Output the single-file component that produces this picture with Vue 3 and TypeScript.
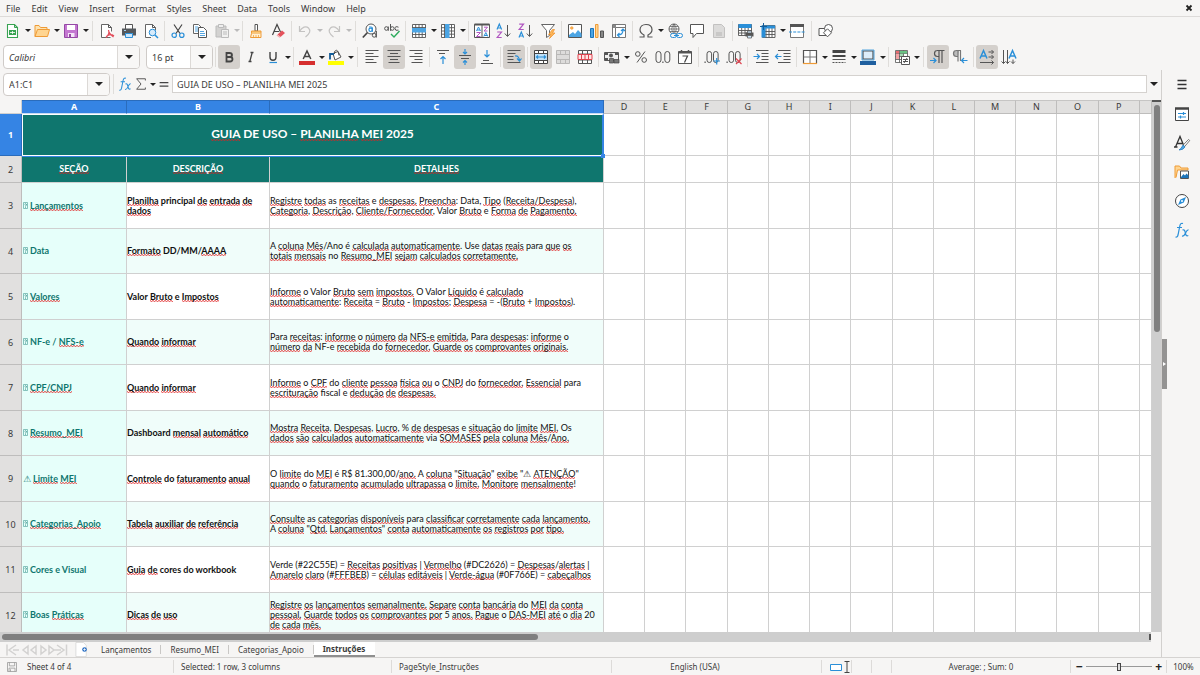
<script setup lang="ts">
import { ref } from 'vue'

interface Tool {
  kind: 'button' | 'sep' | 'wide'
  icon: string
  label: string
  menu: boolean
  pressed: boolean
  off: boolean
}

interface Segment {
  text: string
  marked: boolean
}

interface GuideRow {
  n: number
  warn: boolean
  section: string
  title: string[]
  details: string[]
}

const K = 'fill="none" stroke="#555" stroke-width="1"'
const B = 'fill="none" stroke="#2a8fd8" stroke-width="1.2"'

const icons: Record<string, string> = {
  new: `<path d="M2.500 1.500h7l3 3v10h-10z" fill="#fff" stroke="#38a352" stroke-width="1.100"/><path d="M9.500 1.500v3h3" fill="none" stroke="#38a352"/><path d="M4 7h7v5H4z" fill="#38a352"/><path d="M5 9.500h5M7.500 8v3" stroke="#fff" stroke-width=".8"/>`,
  open: `<path d="M1 13.500v-11h4l1.500 2h6.500v2" fill="#fde3b0" stroke="#ef9b36"/><path d="M1 13.500l2.500-7h12l-2 7z" fill="#ffd591" stroke="#ef9b36"/>`,
  save: `<path d="M1.500 1.500h13v13h-13z" fill="#c477d1" stroke="#9548a5"/><path d="M4 2h8v5H4z" fill="#fff"/><path d="M5 10h6.500v4H5z" fill="#f4e5f7"/><path d="M6 11h2v3H6z" fill="#9548a5"/>`,
  pdf: `<path d="M11.500 14.500h-9v-13h7l3 3v4" fill="#fff" stroke="#666"/><path d="M9.500 1.500v3h3" ${K}/><path d="M9.500 7c1.500 3-1 6-2.500 7.500C8 12 12 10.500 15 13M9.500 7c0 3 3 5.500 5 7" fill="none" stroke="#e34d5b" stroke-width="1.200"/>`,
  print: `<path d="M4.500 6v-4.500h7V6" fill="#fff" stroke="#555"/><path d="M1 5.500h14v7h-3v-2H4v2H1z" fill="#54585c"/><path d="M4.500 10.500h7v4h-7z" fill="#cfe7fa" stroke="#2a8fd8"/><path d="M3 7.500h2" stroke="#9fd0f5"/>`,
  preview: `<path d="M8 14.500H2.500v-13h7l3 3v3" fill="#fff" stroke="#666"/><path d="M9.500 1.500v3h3" ${K}/><circle cx="9.500" cy="9.500" r="3.300" fill="#d7ebfb" stroke="#2a8fd8"/><path d="M12 12l3 3" stroke="#2a8fd8" stroke-width="1.500"/>`,
  cut: `<path d="M4 1.500l6 9M12 1.500l-6 9" fill="none" stroke="#444" stroke-width="1.200"/><circle cx="4.200" cy="12.200" r="2.200" ${B}/><circle cx="11.800" cy="12.200" r="2.200" ${B}/>`,
  copy: `<path d="M6 10.500H1.500v-9h5l3 3" fill="#fff" stroke="#666"/><path d="M3 4h3M3 6h3M3 8h3" stroke="#2a8fd8" stroke-width=".8"/><path d="M6.500 4.500h5l3 3v7h-8z" fill="#fff" stroke="#555"/><path d="M8 8.500h4M8 10.500h5M8 12.500h5" stroke="#2a8fd8" stroke-width=".8"/>`,
  paste: `<path d="M2 3h10v11H2z" fill="#d3d2d1" stroke="#bbb"/><path d="M4.500 1.500h5v3h-5z" fill="#eee" stroke="#bbb"/><path d="M7.500 6.500h7v8h-7z" fill="#f1f1f0" stroke="#bbb"/><path d="M9 9h4M9 11h4" stroke="#bbb"/>`,
  clone: `<path d="M7 1.500h2.500V8H7z" fill="#fff" stroke="#555"/><path d="M3.500 8h9.500v2.500H3.500z" fill="#f7c777" stroke="#ef9b36"/><path d="M3.500 10.500L2.500 14.500H13v-4" fill="#fff0d2" stroke="#ef9b36"/><path d="M5.500 12v2.500M8 12v2.500M10.500 12v2.500" stroke="#ef9b36" stroke-width=".7"/>`,
  clear: `<path d="M2.500 12L7 1.500 10.500 9M4 8.500h5" fill="none" stroke="#444" stroke-width="1.200"/><path d="M7.500 11.500l4.500-4 3 2.500-4.500 4z" fill="#e4525c"/><path d="M7.500 11.500l3 2.500-1 .8-3-2.200z" fill="#f4a6ab"/>`,
  undo: `<path d="M2.500 3v5.500H8M2.500 8.500C5 4 9 2.500 11.500 5s1.500 5.500-3 9" fill="none" stroke="#c4c3c2" stroke-width="1.200"/>`,
  redo: `<path d="M13.500 3v5.500H8M13.500 8.500C11 4 7 2.500 4.500 5S3 10.500 7.500 14" fill="none" stroke="#c4c3c2" stroke-width="1.200"/>`,
  find: `<circle cx="9" cy="6" r="5" fill="#fff" stroke="#555"/><path d="M5.500 9.500L.8 14.500" stroke="#444" stroke-width="1.700"/><circle cx="8.600" cy="6.800" r="1.700" ${B}/><path d="M7 4h2q1.400 0 1.400 1.500v3.200" ${B}/><circle cx="12.200" cy="12.300" r="1.900" fill="#f6f5f4" stroke="#555"/><path d="M14.300 8v6.500" stroke="#555" stroke-width="1.200"/>`,
  spell: `<circle cx="2.400" cy="5.500" r="1.800" ${K}/><path d="M4.300 3.500v4.300M6.500 1v6.800M14.500 4.200q-3.500-1.500-3.500 1.300t3.500 1.600" ${K}/><circle cx="8.300" cy="5.500" r="1.800" ${K}/><path d="M7 11l3 3 5.500-6" fill="none" stroke="#2cab5c" stroke-width="1.400"/>`,
  row: `<path d="M1.500 1.500h13v13h-13zM4.700 1.500v13M8 1.500v13M11.200 1.500v13M1.500 11.500h13M1.500 4.500h13" fill="#fff" stroke="#555" stroke-width=".9"/><path d="M1 5h14v4.500H1z" fill="#4ca5e4"/>`,
  col: `<path d="M1.500 1.500h13v13h-13zM1.500 4.700h13M1.500 8h13M1.500 11.200h13M11.500 1.500v13M4.500 1.500v13" fill="#fff" stroke="#555" stroke-width=".9"/><path d="M5 1h4.500v14H5z" fill="#4ca5e4"/>`,
  sort: `<path d="M.5 1.500h15v13H.5zM8 1.500v13" fill="#fff" stroke="#555"/><path d="M.5 1.500h15" stroke="#555" stroke-width="2"/><path d="M2.500 8l2-4 2 4M3 7h3M9.800 13.500l2-4 2 4M10.300 12.500h3" fill="none" stroke="#2a8fd8"/><path d="M2.500 9.500h4L2.500 13.500h4M10 4.200h3.500L10 8h3.500" fill="none" stroke="#b055c0"/>`,
  asc: `<path d="M1 6.500l2.300-5.500 2.300 5.500M1.800 5h3" ${B}/><path d="M1.200 9h4.300l-4.300 5.500h4.500" fill="none" stroke="#b055c0" stroke-width="1.200"/><path d="M11.500 2v11M8.800 10.500l2.700 3 2.700-3" ${K}/>`,
  desc: `<path d="M1.200 1.200h4.300L1.200 6.500h4.500" fill="none" stroke="#b055c0" stroke-width="1.200"/><path d="M1 14.500L3.300 9l2.300 5.500M1.800 13h3" ${B}/><path d="M11.500 2v11M8.800 10.500l2.700 3 2.700-3" ${K}/>`,
  filter: `<path d="M1.500 1.500h13L9.500 7.500v5l-3 2v-7z" fill="#fff" stroke="#666"/><path d="M12.500 6.500l-4 5h2.500l-1.500 4 5.500-5.500h-2.500l2-3.500z" fill="#fcb65a" stroke="#ef8f26" stroke-width=".7"/>`,
  image: `<path d="M1.500 1.500h13v13h-13z" fill="#fff" stroke="#555"/><path d="M2 12l4-3 2 2 3-4 3.500 3.500V14H2z" fill="#4ca5e4"/><circle cx="4.800" cy="5" r="1.300" fill="#fcb65a" stroke="#ef8f26" stroke-width=".6"/>`,
  chart: `<path d="M1.500 5.500h3v9h-3z" fill="#4ca5e4" stroke="#1c75bb"/><path d="M6.500 1.500h2.500v13H6.500z" fill="#ffd591" stroke="#ef9b36"/><path d="M11.500 8h3v6.500h-3z" fill="#888" stroke="#555"/>`,
  pivot: `<path d="M1.500 1.500h13v13h-13zM4.500 1.500v13M1.500 4.500h13" fill="#fff" stroke="#777"/><path d="M2 2h3v3H2z" fill="#888"/><path d="M7 12c3 0 5-2 5-5M10 8l2-2 2 2M8.500 10l-2 2 2 2" ${B}/>`,
  omega: `<path d="M1.500 14h4.500v-2C3 10.500 2 9 2 6.800 2 3.500 4.500 1.500 8 1.500s6 2 6 5.300c0 2.200-1 3.700-4 5.200v2h4.500" fill="none" stroke="#555" stroke-width="1.200"/>`,
  link: `<circle cx="7" cy="6" r="5" fill="#fff" stroke="#555" stroke-width=".9"/><path d="M2 6h10M7 1v10M3 3.500h8M3 8.500h8M7 1q-4.500 5 0 10M7 1q4.500 5 0 10" fill="none" stroke="#555" stroke-width=".7"/><rect x="3.500" y="10.500" width="6" height="4" rx="2" fill="#f6f5f4" stroke="#2a8fd8"/><rect x="9.500" y="10.500" width="6" height="4" rx="2" fill="#f6f5f4" stroke="#2a8fd8"/><path d="M7 12.500h5" stroke="#2a8fd8"/>`,
  comment: `<path d="M1.500 1.500h13v9H7.500L4 14.500v-4H1.500z" fill="#fff" stroke="#555"/>`,
  header: `<path d="M2.500 1.500h8l3 3v10h-11z" fill="#dcdbda" stroke="#c2c1c0"/><path d="M5 9h6v4H5z" fill="#c9c8c7"/>`,
  range: `<path d="M.5 1.500h13v11H.5zM3.700 1.500v11M7 1.500v11M10.200 1.500v11M.5 7.500h13M.5 10h13" fill="#fff" stroke="#555" stroke-width=".9"/><path d="M.5 1h13v4H.5z" fill="#2a8fd8"/><path d="M7.500 9.500h8v4h-8z" fill="#555"/><path d="M9.500 8h4v2h-4zM9.500 12.500h4v2.500h-4z" fill="#cfe7fa" stroke="#555" stroke-width=".7"/>`,
  freeze: `<path d="M2.500 2.500h12.500v12H2.500zM6 2.500v12M9 2.500v12M12 2.500v12M2.500 8.500h12.500M2.500 11.500h12.500" fill="#fff" stroke="#555" stroke-width=".9"/><path d="M1.500 2.500h13.500v3H1.500zM1.500 2.500h4v12h-4z" fill="#2a8fd8"/><path d="M3.500 0v7M0 3.500h7" stroke="#145d99"/>`,
  split: `<path d="M1.500 2.500h13v12h-13z" fill="#fff" stroke="#777"/><path d="M1 1h14v3H1z" fill="#555"/><path d="M0 9h16" stroke="#2a8fd8" stroke-width="1.200" stroke-dasharray="3 1.200"/>`,
  shapes: `<path d="M1 5.500h7v7H1z" fill="#fff" stroke="#555"/><circle cx="10.500" cy="5.500" r="4" fill="#fff" stroke="#555"/><path d="M9.500 5.800l4 4-4 4-4-4z" fill="#fff" stroke="#555"/>`,
  bold: `<path d="M5.500 4h3q2.500 0 2.500 2T8.500 8h-3zM5.500 8h3.500q2.500 0 2.500 2.200T9 12.500H5.500z" fill="none" stroke="#444" stroke-width="1.800"/>`,
  italic: `<path d="M7.500 3.500h3M5.500 12.500h3M9.200 3.500L6.800 12.500" fill="none" stroke="#444" stroke-width="1.300"/>`,
  underline: `<path d="M5 3v5q0 3.200 3 3.200t3-3.200V3" fill="none" stroke="#444" stroke-width="1.400"/><path d="M4.500 13.500h7.500" stroke="#2a8fd8" stroke-width="1.200"/>`,
  fontcolor: `<path d="M4.200 10L8 2l3.800 8M5.500 7.500h5" fill="none" stroke="#444" stroke-width="1.500"/><path d="M0 12h16v4H0z" fill="#d62f2f"/>`,
  highlight: `<path d="M5 4.500l5-2 3 5.500-6 3z" fill="#fff" stroke="#555"/><path d="M6.500 5V2.500q2-2.500 3.500 0l1 4" ${K}/><path d="M2 10.500V5h4" fill="none" stroke="#145d99" stroke-width="1.800"/><path d="M0 12h16v4H0z" fill="#ffff00"/>`,
  left: `<path d="M1.500 1.500h13M1.500 4.500h8M1.500 7.500h13M1.500 10.500h8M1.500 13.500h11" ${K}/>`,
  center: `<path d="M1.500 1.500h13M4 4.500h8M1.500 7.500h13M4 10.500h8M2.500 13.500h11" ${K}/>`,
  right: `<path d="M1.500 1.500h13M6.500 4.500h8M1.500 7.500h13M6.500 10.500h8M3.500 13.500h11" ${K}/>`,
  top: `<path d="M2 1.500h12M4 4.500h6" ${K}/><path d="M8 15V7.500M5.500 10L8 7.500 10.500 10" ${B}/>`,
  middle: `<path d="M2 6.500h12M4 9.500h8" ${K}/><path d="M8 0v5M6 3l2 2 2-2M8 16v-4.500M6 13.500l2-2 2 2" ${B}/>`,
  bottom: `<path d="M2 14.500h12M4 11.500h6" ${K}/><path d="M8 1v7M5.500 5.500L8 8l2.500-2.500" ${B}/>`,
  wrap: `<path d="M1.500 1.500h13M1.500 4.500h8M1.500 7.500h6M1.500 10.500h6M1.500 13.500h13" ${K}/><path d="M9 7q4-.5 4.500 4.500M11 9.500l2.500 2.500L15.500 9.500" ${B}/>`,
  merge: `<path d="M1.500 1.500h13v13h-13zM5.500 1.500v3M10.500 1.500v3M5.500 11.500v3M10.500 11.500v3M1.500 4.500h13M1.500 11.500h13" fill="#fff" stroke="#444"/><path d="M2 5h12v6H2z" fill="#bfe0f8"/><path d="M3 8h10M5 6.500L3.500 8 5 9.500M11 6.500L12.500 8 11 9.500" ${B}/>`,
  mergeoff: `<path d="M1.500 1.500h13v13h-13zM1.500 5.500h13M1.500 10.500h13M5.500 1.500v4M10.500 1.500v4M5.500 10.500v4M10.500 10.500v4" fill="#dddcdb" stroke="#b9b8b7"/>`,
  splitcells: `<path d="M1.500 1.500h13v13h-13zM1.500 5h13M1.500 11h13M5.500 1.500v13M10.500 1.500v13" fill="#fff" stroke="#555"/><path d="M1 5.500h14v5H1zM4.500 5.500v5M8 5.500v5M11.500 5.500v5" fill="#ffe3e3" stroke="#df4450"/>`,
  currency: `<path d="M.5 3.500h14v8H.5z" fill="#eee" stroke="#555"/><path d="M1 4h3v2H1zM11 4h3v2h-3zM1 9h3v2H1z" fill="#555"/><circle cx="7" cy="6.500" r="2" fill="#555"/><path d="M5.500 9.500h4V14h-4zM10 10.500h5V14h-5z" fill="#777" stroke="#444" stroke-width=".7"/>`,
  percent: `<circle cx="4.800" cy="5" r="2.300" ${K}/><circle cx="11.200" cy="11" r="2.300" ${K}/><path d="M12 2.500L4 13.500" ${K}/>`,
  number: `<rect x="1" y="2.500" width="5" height="11" rx="2.500" ${K}/><rect x="9.800" y="2.500" width="5" height="11" rx="2.500" ${K}/><path d="M7.300 12.500h1.200V14H7.300z" fill="#555"/>`,
  date: `<path d="M1.500 2.500h13v12h-13z" fill="#fff" stroke="#555"/><path d="M1.500 3.500h13" stroke="#555" stroke-width="2"/><path d="M4.500 1v3M11.500 1v3" stroke="#555" stroke-width="1.500"/><path d="M5.500 7h5l-3 6.500" fill="none" stroke="#444" stroke-width="1.200"/>`,
  adddec: `<rect x="3" y="2.500" width="4.600" height="11" rx="2.300" ${K}/><rect x="9.500" y="2.500" width="4.600" height="11" rx="2.300" ${K}/><path d="M.5 12.500h1.200V14H.5z" fill="#555"/><path d="M9.500 12h6.500M12.700 9v6.500" ${B}/>`,
  deldec: `<rect x="3" y="2.500" width="4.600" height="11" rx="2.300" ${K}/><rect x="9.500" y="2.500" width="4.600" height="11" rx="2.300" ${K}/><path d="M.5 12.500h1.200V14H.5z" fill="#555"/><path d="M10 9.500l5.500 5.500M15.500 9.500L10 15" fill="none" stroke="#e04450" stroke-width="1.200"/>`,
  indent: `<path d="M3 1.500h12.500M8.500 4.500h7M8.500 7.500h7M8.500 10.500h7M3 13.500h12.500" ${K}/><path d="M.5 7.500h6M4 5l2.500 2.500L4 10" ${B}/>`,
  outdent: `<path d="M3 1.500h12.500M8.500 4.500h7M8.500 7.500h7M8.500 10.500h7M3 13.500h12.500" ${K}/><path d="M.5 7.500h6M3 5L.5 7.500 3 10" ${B}/>`,
  borders: `<path d="M1.500 14.500v-13h13v13" fill="#fff" stroke="#555" stroke-width="1.200"/><path d="M8 2v12M2 8h12" stroke="#777"/><path d="M1 14.500h14" stroke="#ef9b36" stroke-width="1.200"/>`,
  linestyle: `<path d="M1.500 2.500h13" stroke="#444" stroke-width="3"/><path d="M1.500 7h13" stroke="#444" stroke-width="2"/><path d="M1.500 10.500h13" stroke="#555"/><path d="M1.500 13.500h13" stroke="#555" stroke-dasharray="2 1"/>`,
  linecolor: `<path d="M3 2h10v8H3z" fill="#dcedfa" stroke="#555" stroke-width="1.200"/><path d="M2 1h12v10H2z" fill="none" stroke="#2a8fd8" stroke-width=".8"/><path d="M0 12h16v4H0z" fill="#1f5f9f"/>`,
  cond: `<path d="M1.500 1.500h12v12h-12zM1.500 4.500h12M1.500 7.500h12M1.500 10.500h12M5.500 1.500v12M9.500 1.500v12" fill="#fff" stroke="#555" stroke-width=".8"/><path d="M2 2h3v2.500H2z" fill="#e86b70"/><path d="M6 2h7v2.500H6z" fill="#69c383"/><path d="M2 5h3v5H2z" fill="#f3a2a5"/><path d="M6 5h3v2H6z" fill="#a6dfb4"/><path d="M7.500 7.500h8v8h-8z" fill="#fff" stroke="#555"/><path d="M9 10.500h5M9 12.500h5M13 9l-3 5" ${K}/>`,
  ltr: `<path d="M11 1.500h-3.500q-3 0-3 3t3 3H9M9 1.500v12.500M12 1.500v12.500M7 1.500h7.500" fill="none" stroke="#555" stroke-width="1.200"/><path d="M0 11.500h6M3.500 9L6 11.500 3.500 14" ${B}/>`,
  rtl: `<path d="M7 1.500H4.500q-3 0-3 3t3 3H6z" fill="#bbb"/><path d="M8 1.500H4.500q-3 0-3 3t3 3H6M6 1.500v11M8.500 1.500V12M4 1.500h5" fill="none" stroke="#777" stroke-width="1.200"/><path d="M15.500 11.500h-6M12 9l-2.500 2.500L12 14" ${B}/>`,
  horiz: `<path d="M1 9.500L4.500 1.500 8 9.500M2.200 7h4.600" fill="none" stroke="#2a8fd8" stroke-width="1.500"/><path d="M9.500 3h5M12.500 1l2 2-2 2M9.500 8h5M12.500 6l2 2-2 2M1 13.500h13.500M12.500 11.500l2 2-2 2" ${K}/>`,
  vert: `<path d="M8 9.500l3.500-8 3.500 8M9.200 7h4.600" fill="none" stroke="#2a8fd8" stroke-width="1.500"/><path d="M2.500 1v13.500M.5 12.500l2 2 2-2M6.500 1v13.500M5 12.500l1.500 2 2-2M12 10.500v4M10 12.500l2 2 2-2" ${K}/>`,
  fx: `<path d="M9 1.500Q6.500 .5 5.800 4L4 13q-.6 2.500-2.500 2M3 5.500h5" fill="none" stroke="#2a8fd8" stroke-width="1.200"/><path d="M8.500 8q2-.8 2.500 1.500l.8 3q.5 2 2.500 1M14.500 7.800Q13 7.500 11.500 11T8 14.200" fill="none" stroke="#2a8fd8" stroke-width="1.200"/>`,
  sigma: `<path d="M13 4V2H3l5 6-5 6h10v-2" fill="none" stroke="#555" stroke-width="1.100"/>`,
  equals: `<path d="M3 6.500h10M3 10.500h10" stroke="#444" stroke-width="1.500"/>`,
  menu: `<path d="M3.500 3.500h9M3.500 7.500h9M3.500 11.500h9" stroke="#333" stroke-width="1.300"/>`,
  props: `<path d="M1.500 2.500h13v12h-13z" fill="#fff" stroke="#444"/><path d="M1 2.500h14" stroke="#444" stroke-width="2.500"/><path d="M4 7.500h8M9.500 6v3M4 11h8M6.500 9.500v3" ${B}/>`,
  styles: `<path d="M1.500 12L6 1.500 9.500 10M3 8.500h6M0 12h3.500" fill="none" stroke="#333" stroke-width="1.300"/><path d="M14.500 4.500l1.200 1-5 6-1.500-1.500z" fill="#fff" stroke="#555" stroke-width=".8"/><path d="M9 10l2 2q-1.500 3-6 3 2.500-1.500 4-5z" fill="#4ca5e4" stroke="#1c75bb" stroke-width=".7"/>`,
  gallery: `<path d="M1 14V2h4.500l1.500 2H14v2H3.500L2 13.500" fill="#ffd591" stroke="#ef9b36"/><path d="M6.500 7h8v7.500h-8z" fill="#fff" stroke="#555"/><path d="M7 13l2.500-3 1.500 1.500 1.500-2 2 2v2.500H7z" fill="#1c75bb"/>`,
  navigator: `<circle cx="8" cy="8" r="6.500" fill="#fff" stroke="#444"/><path d="M12 4L9.800 9.500 4 12l2.400-5.600z" fill="#2a8fd8"/><circle cx="8" cy="8" r="1" fill="#fff"/>`,
  disk: `<path d="M2 2h12v12H2z" ${K}/><path d="M4.500 2v4.500h7V2M4 14V9.500h8V14M6 11v3" ${K}/>`,
}

function toolbar(spec: string): Tool[] {
  return spec.split(' ').map((token) => {
    if (token === '|' || token === '||') {
      return { kind: token === '|' ? 'sep' : 'wide', icon: '', label: '', menu: false, pressed: false, off: false }
    }
    const name = token.replace(/[^a-z]/g, '')
    return {
      kind: 'button',
      icon: icons[name],
      label: name,
      menu: token.includes('+'),
      pressed: token.includes('!'),
      off: token.includes('-'),
    }
  })
}

const standardBar = toolbar(
  'new+ open+ save+ || pdf print preview | cut copy paste+- | clone clear | undo+- redo+- || find spell | row+ col+ | sort asc desc filter | image chart pivot | omega+ link comment header- | range freeze+ split || shapes',
)
const formatBar = toolbar(
  'bold! italic underline+ | fontcolor+ highlight+ || left center! right | top middle! bottom | wrap! | merge! mergeoff- splitcells | currency+ percent number date | adddec deldec | indent outdent | borders+ linestyle+ linecolor+ | cond+ || ltr! rtl | horiz! vert',
)
const sidebar = toolbar('menu props styles gallery navigator fx')

const menus = ['File', 'Edit', 'View', 'Insert', 'Format', 'Styles', 'Sheet', 'Data', 'Tools', 'Window', 'Help']
const emptyColumns = 'DEFGHIJKLMNOP'.split('')
const sheets = ['Lançamentos', 'Resumo_MEI', 'Categorias_Apoio', 'Instruções']
const activeSheet = ref('Instruções')
const fontName = ref('Calibri')
const fontSize = ref('16 pt')
const cellRef = ref('A1:C1')
const formula = ref('GUIA DE USO – PLANILHA MEI 2025')
const zoomLevel = ref(100)

// Square brackets enclose the words that the spelling checker underlines.
const title = '[GUIA] DE USO – [PLANILHA] [MEI] 2025'
const headings = ['[SEÇÃO]', '[DESCRIÇÃO]', '[DETALHES]']
const rows: GuideRow[] = [
  { n: 3, warn: false, section: '[Lançamentos]', title: ['[Planilha] principal [de] [entrada] [de]', '[dados]'], details: ['[Registre] [todas] as [receitas] e [despesas.] [Preencha]: Data, [Tipo] ([Receita/Despesa]),', '[Categoria], [Descrição], [Cliente/Fornecedor], Valor [Bruto] e [Forma] [de] [Pagamento.]'] },
  { n: 4, warn: false, section: 'Data', title: ['[Formato] DD/MM/[AAAA]'], details: ['A [coluna] [Mês]/Ano é [calculada] [automaticamente]. Use [datas] [reais] para [que] [os]', '[totais] [mensais] no [Resumo_MEI] [sejam] [calculados] [corretamente.]'] },
  { n: 5, warn: false, section: '[Valores]', title: ['Valor [Bruto] e [Impostos]'], details: ['[Informe] o Valor [Bruto] [sem] [impostos.] O Valor [Líquido] é [calculado]', '[automaticamente]: [Receita] = [Bruto] - [Impostos]; [Despesa] = -([Bruto] + [Impostos]).'] },
  { n: 6, warn: false, section: 'NF-e / [NFS-e]', title: ['[Quando] [informar]'], details: ['Para [receitas]: [informe] o [número] [da] [NFS-e] [emitida.] Para [despesas]: [informe] o', '[número] [da] NF-e [recebida] do [fornecedor.] [Guarde] [os] [comprovantes] [originais.]'] },
  { n: 7, warn: false, section: '[CPF/CNPJ]', title: ['[Quando] [informar]'], details: ['[Informe] o [CPF] do [cliente] [pessoa] [física] [ou] o [CNPJ] do [fornecedor.] [Essencial] para', '[escrituração] fiscal e [dedução] [de] [despesas.]'] },
  { n: 8, warn: false, section: '[Resumo_MEI]', title: ['Dashboard [mensal] [automático]'], details: ['[Mostra] [Receita], [Despesas], [Lucro], % [de] [despesas] e [situação] do [limite] [MEI.] Os', '[dados] [são] [calculados] [automaticamente] via [SOMASES] [pela] [coluna] [Mês]/[Ano.]'] },
  { n: 9, warn: true, section: '[Limite] [MEI]', title: ['[Controle] do [faturamento] [anual]'], details: ['O [limite] do [MEI] é R$ 81.300,00/[ano.] A [coluna] "[Situação]" [exibe] "⚠ [ATENÇÃO]"', '[quando] o [faturamento] [acumulado] [ultrapassa] o [limite.] [Monitore] [mensalmente]!'] },
  { n: 10, warn: false, section: '[Categorias_Apoio]', title: ['[Tabela] [auxiliar] [de] [referência]'], details: ['[Consulte] as [categorias] [disponíveis] para [classificar] [corretamente] [cada] [lançamento.]', 'A [coluna] "[Qtd.] [Lançamentos]" [conta] [automaticamente] [os] [registros] [por] [tipo.]'] },
  { n: 11, warn: false, section: 'Cores e Visual', title: ['[Guia] [de] cores do workbook'], details: ['Verde (#22C55E) = [Receitas] [positivas] | [Vermelho] (#DC2626) = [Despesas]/[alertas] |', '[Amarelo] [claro] (#[FFFBEB]) = [células] [editáveis] | [Verde-água] (#0F766E) = [cabeçalhos]'] },
  { n: 12, warn: false, section: 'Boas [Práticas]', title: ['[Dicas] [de] [uso]'], details: ['[Registre] [os] [lançamentos] [semanalmente.] [Separe] [conta] [bancária] do [MEI] [da] [conta]', '[pessoal.] [Guarde] [todos] [os] [comprovantes] [por] 5 [anos.] [Pague] o [DAS-MEI] [até] o [dia] 20', '[de] [cada] [mês.]'] },
]

function segments(line: string): Segment[] {
  return line
    .split(/(\[[^\]]+\])/)
    .filter((part) => part.length > 0)
    .map((part) => (part.startsWith('[') ? { text: part.slice(1, -1), marked: true } : { text: part, marked: false }))
}
</script>

<template>
  <div class="app">
    <nav class="menubar" aria-label="Menu">
      <button v-for="m in menus" :key="m" type="button">{{ m }}</button>
      <button type="button" class="close" aria-label="Close document">
        <svg viewBox="0 0 8 8"><path d="M1.500 1.500l5 5M6.500 1.500l-5 5" stroke="#222" stroke-width="1.800" /></svg>
      </button>
    </nav>

    <div class="toolbar" role="toolbar" aria-label="Standard">
      <template v-for="(t, i) in standardBar" :key="i">
        <template v-if="t.kind === 'button'">
          <button type="button" class="tool" :disabled="t.off && !t.menu" :aria-label="t.label">
            <svg viewBox="0 0 16 16" v-html="t.icon"></svg>
          </button>
          <button v-if="t.menu" type="button" class="caret" :class="{ off: t.off }" :aria-label="t.label + ' options'"></button>
        </template>
        <span v-else class="sep" :class="t.kind"></span>
      </template>
    </div>

    <div class="toolbar format" role="toolbar" aria-label="Formatting">
      <div class="combo font">
        <input v-model="fontName" type="text" aria-label="Font name" />
        <button type="button" aria-label="Font list"></button>
      </div>
      <div class="combo size">
        <input v-model="fontSize" type="text" aria-label="Font size" />
        <button type="button" aria-label="Size list"></button>
      </div>
      <span class="sep"></span>
      <template v-for="(t, i) in formatBar" :key="i">
        <template v-if="t.kind === 'button'">
          <button type="button" class="tool" :class="{ pressed: t.pressed }" :aria-pressed="t.pressed" :aria-label="t.label">
            <svg viewBox="0 0 16 16" v-html="t.icon"></svg>
          </button>
          <button v-if="t.menu" type="button" class="caret" :aria-label="t.label + ' options'"></button>
        </template>
        <span v-else class="sep" :class="t.kind"></span>
      </template>
    </div>

    <div class="body">
      <main class="work">
        <div class="formulabar">
          <div class="combo name">
            <input v-model="cellRef" type="text" aria-label="Name box" />
            <button type="button" aria-label="Named ranges"></button>
          </div>
          <span class="sep wide"></span>
          <button type="button" class="small" aria-label="Function wizard"><svg viewBox="0 0 16 16" v-html="icons.fx"></svg></button>
          <button type="button" class="small" aria-label="Select function"><svg viewBox="0 0 16 16" v-html="icons.sigma"></svg></button>
          <button type="button" class="caret" aria-label="Function options"></button>
          <button type="button" class="small eq" aria-label="Formula"><svg viewBox="0 0 16 16" v-html="icons.equals"></svg></button>
          <input v-model="formula" class="formula" type="text" aria-label="Input line" />
          <button type="button" class="expand" aria-label="Expand formula bar"></button>
        </div>

        <div class="sheet">
          <div class="grid">
            <table>
              <colgroup>
                <col class="c-num" />
                <col class="c-a" />
                <col class="c-b" />
                <col class="c-c" />
                <col v-for="c in emptyColumns" :key="c" />
                <col class="c-last" />
              </colgroup>
              <thead>
                <tr>
                  <td class="corner"></td>
                  <th v-for="c in ['A', 'B', 'C']" :key="c" scope="col" class="on">{{ c }}</th>
                  <th v-for="c in emptyColumns" :key="c" scope="col">{{ c }}</th>
                  <th></th>
                </tr>
              </thead>
              <tbody>
                <tr class="r-title">
                  <th scope="row" class="on">1</th>
                  <td colspan="3" class="title">
                    <span v-for="(s, i) in segments(title)" :key="i" :class="{ sp: s.marked }">{{ s.text }}</span>
                    <i class="handle"></i>
                  </td>
                  <td v-for="c in 14" :key="c"></td>
                </tr>
                <tr class="r-head">
                  <th scope="row">2</th>
                  <td v-for="h in headings" :key="h" class="heading">
                    <span v-for="(s, i) in segments(h)" :key="i" :class="{ sp: s.marked }">{{ s.text }}</span>
                  </td>
                  <td v-for="c in 14" :key="c"></td>
                </tr>
                <tr v-for="r in rows" :key="r.n" class="r-item" :class="{ even: r.n % 2 === 0 }">
                  <th scope="row">{{ r.n }}</th>
                  <td class="section">
                    <span v-if="r.warn" class="warn">⚠</span>
                    <svg v-else class="tofu" viewBox="0 0 5 7" aria-hidden="true">
                      <path d="M.5 .5h4v6h-4z" fill="none" stroke="#5aa9a2" stroke-width=".7" />
                      <path d="M1.600 2.300q1-1 1.700 0t-.8 1.500v.6M2.500 5v.7" fill="none" stroke="#0f766e" stroke-width=".7" />
                    </svg>
                    <span v-for="(s, i) in segments(r.section)" :key="i" :class="{ sp: s.marked }">{{ s.text }}</span>
                  </td>
                  <td class="name-cell">
                    <div v-for="(line, l) in r.title" :key="l">
                      <span v-for="(s, i) in segments(line)" :key="i" :class="{ sp: s.marked }">{{ s.text }}</span>
                    </div>
                  </td>
                  <td class="details">
                    <div v-for="(line, l) in r.details" :key="l">
                      <span v-for="(s, i) in segments(line)" :key="i" :class="{ sp: s.marked }">{{ s.text }}</span>
                    </div>
                  </td>
                  <td v-for="c in 14" :key="c"></td>
                </tr>
              </tbody>
            </table>
          </div>
          <div class="vscroll"><i></i></div>
        </div>
        <div class="hscroll"><i></i></div>

        <div class="tabs">
          <button type="button" class="nav" aria-label="Sheet navigation">
            <svg viewBox="0 0 64 14">
              <path d="M3 1.500v11M12 2L5 7l7 5M9 7h6M24 3l-5 4 5 4zM32 3l-5 4 5 4zM37 3l5 4-5 4zM45 3l5 4-5 4zM53 2l7 5-7 5M50 7h7M62.500 1.500v11" fill="none" stroke="#d3d2d1" stroke-width="1.500" />
            </svg>
          </button>
          <button type="button" class="add" aria-label="Add sheet">
            <svg viewBox="0 0 14 16">
              <path d="M.5 .5h8l3 3v12H.5z" fill="#fff" stroke="#d0cfce" stroke-width=".7" />
              <circle cx="9.700" cy="8" r="2.500" fill="#2a6fc4" />
              <path d="M9.700 6.600v2.800M8.300 8h2.800" stroke="#fff" stroke-width=".8" />
            </svg>
          </button>
          <button
            v-for="s in sheets"
            :key="s"
            type="button"
            class="tab"
            :class="{ active: s === activeSheet }"
            @click="activeSheet = s"
          >{{ s }}</button>
        </div>
      </main>

      <div class="gutter"><button type="button" aria-label="Hide sidebar"></button></div>
      <aside class="sidebar">
        <button v-for="t in sidebar" :key="t.label" type="button" :aria-label="t.label">
          <svg viewBox="0 0 16 16" v-html="t.icon"></svg>
        </button>
      </aside>
    </div>

    <footer class="status">
      <span class="first"><svg viewBox="0 0 16 16" v-html="icons.disk"></svg>Sheet 4 of 4</span>
      <span>Selected: 1 row, 3 columns</span>
      <span>PageStyle_Instruções</span>
      <span class="mid open-end">English (USA)</span>
      <span></span>
      <span class="mode">
        <svg viewBox="0 0 24 14">
          <path d="M1.500 4.500h11v6h-11z" fill="#fff" stroke="#2a8fd8" />
          <path d="M15.500 1.500h5M18 1.500v11M15.500 12.500h5" fill="none" stroke="#444" />
        </svg>
      </span>
      <span></span>
      <span></span>
      <span class="mid">Average: ; Sum: 0</span>
      <label class="zoom">
        <b>−</b>
        <input v-model.number="zoomLevel" type="range" min="0" max="200" aria-label="Zoom" />
        <b>+</b>
      </label>
      <span class="mid">{{ zoomLevel }}%</span>
    </footer>
  </div>
</template>

<style>
html,
body {
  margin: 0;
  overflow: hidden;
}
</style>

<style scoped>
.app {
  display: flex;
  flex-direction: column;
  height: 100vh;
  background: #f6f5f4;
  color: #3a3a3a;
  font-family: 'Noto Sans', sans-serif;
  font-size: 9px;
}
button,
input {
  font: inherit;
  color: inherit;
  margin: 0;
  padding: 0;
  border: 0;
  background: none;
  outline: none;
}
svg {
  display: block;
  overflow: visible;
}
.menubar {
  display: flex;
  gap: 11px;
  height: 16px;
  padding: 0 7px 0 6px;
  border-bottom: 1px solid #dddbd9;
  flex: none;
}
.menubar .close {
  margin-left: auto;
}
.close svg {
  width: 8px;
  height: 8px;
}
.toolbar {
  display: flex;
  align-items: center;
  height: 27px;
  padding-left: 2px;
  flex: none;
}
.toolbar.format {
  height: 26px;
  padding-left: 3px;
}
.tool {
  display: grid;
  place-items: center;
  width: 22px;
  height: 24px;
  border-radius: 3px;
  flex: none;
}
.tool svg {
  width: 16px;
  height: 16px;
}
.tool.pressed {
  background: #d4d0cc;
}
.caret {
  display: grid;
  place-items: center;
  width: 7px;
  height: 20px;
  flex: none;
}
.caret::before,
.combo button::before,
.expand::before {
  content: '';
  border: 3px solid transparent;
  border-top-color: #222;
  border-bottom: 0;
}
.caret.off::before {
  border-top-color: #bbb;
}
.sep {
  display: flex;
  justify-content: center;
  width: 5px;
  flex: none;
}
.sep.wide {
  width: 7px;
}
.sep::before {
  content: '';
  width: 1px;
  height: 20px;
  background: #dfddda;
}
.combo {
  display: flex;
  box-sizing: border-box;
  height: 24px;
  border: 1px solid #cfcbc8;
  border-radius: 4px;
  background: #fff;
  overflow: hidden;
  flex: none;
}
.combo input {
  flex: 1;
  min-width: 0;
  padding-left: 5px;
}
.combo button {
  display: grid;
  place-items: center;
  width: 22px;
  border-left: 1px solid #dcd9d6;
  background: #f8f7f6;
}
.combo button::before {
  border-width: 4px 4px 0;
}
.combo.font {
  width: 137px;
  font-style: italic;
}
.combo.size {
  width: 67px;
  margin-left: 6px;
}
.combo.name {
  width: 107px;
}
.body {
  display: flex;
  flex: 1;
  min-height: 0;
}
.work {
  display: flex;
  flex-direction: column;
  flex: 1;
  min-width: 0;
}
.formulabar {
  display: flex;
  align-items: center;
  box-sizing: border-box;
  height: 30px;
  padding: 0 0 2px 3px;
  flex: none;
}
.formulabar .combo {
  height: 23px;
}
.small {
  display: grid;
  place-items: center;
  width: 16px;
  height: 22px;
}
.small svg {
  width: 14px;
  height: 14px;
}
.formula {
  flex: 1;
  min-width: 0;
  height: 16px;
  padding-left: 4px;
  border: 1px solid #d5d2cf;
  background: #fff;
}
.expand {
  display: grid;
  place-items: center;
  width: 14px;
  height: 16px;
}
.expand::before {
  border-width: 4px 4px 0;
}
.sheet {
  display: flex;
  flex: 1;
  min-height: 0;
}
.grid {
  flex: 1;
  min-width: 0;
  overflow: hidden;
  background: #fff;
}
table {
  width: 100%;
  table-layout: fixed;
  border-collapse: separate;
  border-spacing: 0;
}
.c-num {
  width: 22px;
}
.c-a {
  width: 105px;
}
.c-b {
  width: 143px;
}
.c-c {
  width: 334px;
}
.c-last {
  width: 12px;
}
th,
td {
  box-sizing: border-box;
  padding: 0;
  border-right: 1px solid #d0d0d0;
  border-bottom: 1px solid #d0d0d0;
}
th {
  background: #e1e0df;
  border-color: #bebdbc;
  font-weight: 400;
  text-align: center;
}
thead tr {
  height: 14px;
}
thead th {
  line-height: 12px;
  border-top: 1px solid #c6c5c4;
}
th.on {
  background: #3584e4;
  border-color: #2a6cbc;
  color: #fff;
  font-weight: 700;
}
thead th.on {
  border-bottom-color: #c9dcf3;
}
.corner {
  background: #f6f5f4;
}
td {
  font-family: Lato, Carlito, sans-serif;
  line-height: 10px;
  white-space: nowrap;
  color: #111;
}
.r-title {
  height: 42px;
}
.r-head {
  height: 27px;
}
.r-item {
  height: 46px;
}
.r-item.even {
  height: 45px;
}
.title {
  position: relative;
  padding-bottom: 2px;
  background: #0f766e;
  color: #fff;
  font-size: 12px;
  font-weight: 700;
  text-align: center;
  border: 1px solid #fff;
  border-right: 2px solid #3584e4;
  box-shadow: 0 1px 0 #3584e4;
}
.handle {
  position: absolute;
  right: -3px;
  bottom: -3px;
  width: 4px;
  height: 4px;
  background: #3584e4;
}
.heading {
  background: #0f766e;
  color: #fff;
  font-weight: 700;
  text-align: center;
}
.section {
  padding-left: 1px;
  background: #e6fffa;
  color: #0f766e;
  font-weight: 700;
}
.even .name-cell,
.even .details {
  background: #f0fdfa;
}
.name-cell {
  font-weight: 700;
}
.tofu {
  display: inline-block;
  width: 5px;
  height: 7px;
  margin-right: 2px;
}
.warn {
  margin-right: 2px;
  font-family: 'DejaVu Sans', sans-serif;
  font-weight: 400;
}
.sp {
  background: url("data:image/svg+xml,%3Csvg xmlns='http://www.w3.org/2000/svg' width='3' height='2'%3E%3Cpath d='M-1.500 1.500L0 .5 1.500 1.500 3 .5 4.500 1.500' fill='none' stroke='%23e02020' stroke-width='.9'/%3E%3C/svg%3E") left bottom repeat-x;
}
.vscroll {
  display: flex;
  width: 9px;
  padding-top: 3px;
  border-top: 2px solid #555;
  background: #cecece;
  justify-content: center;
  flex: none;
}
.vscroll i {
  width: 6px;
  height: 43%;
  border-radius: 3px;
  background: #7f7f7f;
}
.hscroll {
  display: flex;
  align-items: center;
  height: 10px;
  margin-right: 10px;
  background: #cecece;
  flex: none;
}
.hscroll i {
  width: 46.600%;
  height: 6px;
  margin-left: 2px;
  border-radius: 3px;
  background: #7f7f7f;
}
.hscroll::after {
  content: '';
  width: 2px;
  height: 6px;
  margin-left: auto;
  background: #555;
}
.tabs {
  display: flex;
  height: 15px;
  padding-left: 4px;
  font-size: 8px;
  flex: none;
}
.nav svg {
  width: 64px;
  height: 14px;
}
.add {
  margin: 0 3px 0 7px;
}
.add svg {
  width: 14px;
  height: 15px;
}
.tab {
  position: relative;
  padding: 0 10px 0 9px;
  line-height: 13px;
}
.tab:not(.active)::after {
  content: '';
  position: absolute;
  right: 0;
  top: 3px;
  width: 1px;
  height: 9px;
  background: #c9c7c5;
}
.tab.active {
  background: #fff;
  border-bottom: 2px solid #8f8f8f;
  font-weight: 700;
}
.gutter {
  display: flex;
  align-items: center;
  width: 5px;
  border-left: 1px solid #d2d0ce;
  flex: none;
}
.gutter button {
  display: grid;
  place-items: center;
  width: 5px;
  height: 50px;
  background: #949392;
}
.gutter button::before {
  content: '';
  border: 2px solid transparent;
  border-left: 3px solid #fff;
  border-right: 0;
}
.sidebar {
  display: flex;
  flex-direction: column;
  align-items: center;
  gap: 13px;
  box-sizing: border-box;
  width: 33px;
  padding: 7px 4px 0 0;
  flex: none;
}
.sidebar svg {
  width: 16px;
  height: 16px;
}
.status {
  display: grid;
  grid-template-columns: 174fr 218fr 220fr 166fr 44fr 30fr 20fr 20fr 179fr 96fr 33fr;
  align-items: center;
  height: 17px;
  border-top: 1px solid #d5d3d1;
  font-size: 8px;
  flex: none;
}
.status > * {
  display: flex;
  align-items: center;
  box-sizing: border-box;
  height: 13px;
  min-width: 0;
  padding-left: 7px;
  border-right: 1px solid #dddbd9;
  white-space: nowrap;
}
.status > :last-child,
.status .open-end {
  border-right: 0;
}
.status .first {
  gap: 9px;
  padding-left: 6px;
}
.first svg {
  width: 12px;
  height: 12px;
  opacity: 0.6;
}
.status .mid {
  justify-content: center;
  padding: 0;
}
.mode svg {
  width: 24px;
  height: 14px;
}
.status .zoom {
  gap: 3px;
  padding: 0 4px 0 5px;
}
.zoom b {
  font-size: 12px;
  line-height: 12px;
  color: #222;
}
.zoom input {
  flex: 1;
  min-width: 0;
  height: 9px;
  appearance: none;
  background: linear-gradient(#999, #999) center / 100% 1px no-repeat;
}
.zoom input::-webkit-slider-thumb {
  appearance: none;
  box-sizing: border-box;
  width: 4px;
  height: 8px;
  border: 1px solid #444;
  background: #ddd;
}
</style>
